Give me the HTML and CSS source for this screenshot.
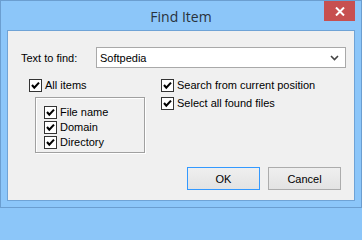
FILE: index.html
```html
<!DOCTYPE html>
<html>
<head>
<meta charset="utf-8">
<link rel="stylesheet" href="styles.css">
</head>
<body>
<div class="window">
  <div class="titlebar">
    <span></span>
    <span class="title">Find Item</span>
    <span class="close"><svg width="10" height="9" viewBox="0 0 10 9"><path d="M1 0.5 L9 8.5 M9 0.5 L1 8.5" stroke="#fff" stroke-width="2"/></svg></span>
  </div>
  <div class="client">
    <div class="find-row">
      <span class="label">Text to find:</span>
      <div class="combo">
        <span class="combo-text">Softpedia</span>
        <svg class="arrow" width="9" height="6" viewBox="0 0 9 6"><path d="M1 1 L4.5 4.5 L8 1" stroke="#444" stroke-width="1.6" fill="none"/></svg>
      </div>
    </div>
    <div class="options">
      <div class="col-left">
        <label class="check"><span class="box"><svg width="11" height="11" viewBox="0 0 11 11"><path d="M2 5 L4.3 7.6 L9 2.6" stroke="#000" stroke-width="2.1" fill="none"/></svg></span>All items</label>
        <div class="group">
          <label class="check"><span class="box"><svg width="11" height="11" viewBox="0 0 11 11"><path d="M2 5 L4.3 7.6 L9 2.6" stroke="#000" stroke-width="2.1" fill="none"/></svg></span>File name</label>
          <label class="check"><span class="box"><svg width="11" height="11" viewBox="0 0 11 11"><path d="M2 5 L4.3 7.6 L9 2.6" stroke="#000" stroke-width="2.1" fill="none"/></svg></span>Domain</label>
          <label class="check"><span class="box"><svg width="11" height="11" viewBox="0 0 11 11"><path d="M2 5 L4.3 7.6 L9 2.6" stroke="#000" stroke-width="2.1" fill="none"/></svg></span>Directory</label>
        </div>
      </div>
      <div class="col-right">
        <label class="check"><span class="box"><svg width="11" height="11" viewBox="0 0 11 11"><path d="M2 5 L4.3 7.6 L9 2.6" stroke="#000" stroke-width="2.1" fill="none"/></svg></span>Search from current position</label>
        <label class="check"><span class="box"><svg width="11" height="11" viewBox="0 0 11 11"><path d="M2 5 L4.3 7.6 L9 2.6" stroke="#000" stroke-width="2.1" fill="none"/></svg></span>Select all found files</label>
      </div>
    </div>
    <div class="buttons">
      <button class="btn default">OK</button>
      <button class="btn">Cancel</button>
    </div>
  </div>
</div>
</body>
</html>
```
FILE: styles.css
```css
html, body {
  margin: 0;
  padding: 0;
  background: #8cc6f9;
}
.window {
  width: 362px;
  height: 208px;
  box-sizing: border-box;
  border: 1px solid #6b9ed0;
  background: #8cc6f9;
  padding: 0 6px 6px 6px;
  display: flex;
  flex-direction: column;
  font-family: "Liberation Sans", Arial, sans-serif;
  font-size: 11px;
  color: #000;
}
.titlebar {
  height: 29px;
  display: grid;
  grid-template-columns: 1fr auto 1fr;
}
.title {
  font-family: "Open Sans", "Noto Sans", sans-serif;
  font-size: 14px;
  color: #29323c;
  line-height: 29px;
  padding-top: 1px;
}
.close {
  justify-self: end;
  width: 31px;
  height: 20px;
  background: #c75050;
  display: flex;
  align-items: center;
  justify-content: center;
}
.client {
  flex: 1;
  border: 1px solid #6fa3d6;
  background: #f0f0f0;
  padding: 16px 8px 10px 13px;
  display: flex;
  flex-direction: column;
}
.find-row {
  display: flex;
  align-items: center;
  height: 21px;
}
.label {
  width: 75px;
}
.combo {
  flex: 1;
  height: 21px;
  box-sizing: border-box;
  border: 1px solid #a9a9a9;
  background: #fff;
  display: flex;
  align-items: center;
  padding: 0 6px 0 3px;
}
.combo-text {
  flex: 1;
}
.options {
  display: flex;
  margin-top: 11px;
}
.col-left {
  margin-left: 8px;
  width: 132px;
  display: flex;
  flex-direction: column;
}
.col-right {
  display: flex;
  flex-direction: column;
  gap: 5px;
}
.check {
  display: flex;
  align-items: center;
  height: 13px;
  line-height: 13px;
  gap: 3px;
  white-space: nowrap;
}
.box {
  width: 13px;
  height: 13px;
  box-sizing: border-box;
  border: 1px solid #333;
  background: #fff;
  display: flex;
  flex: none;
}
.group {
  margin-top: 5px;
  margin-left: 6px;
  width: 110px;
  box-sizing: border-box;
  border: 1px solid #a0a0a0;
  box-shadow: 1px 1px 0 #fff, inset 1px 1px 0 #fff;
  padding: 8px 0 3px 8px;
  display: flex;
  flex-direction: column;
  gap: 2px;
}
.buttons {
  margin-top: auto;
  margin-right: 5px;
  display: flex;
  justify-content: flex-end;
  gap: 8px;
}
.btn {
  width: 73px;
  height: 23px;
  box-sizing: border-box;
  border: 1px solid #acacac;
  background: linear-gradient(#efefef, #e3e3e3);
  font-family: "Liberation Sans", Arial, sans-serif;
  font-size: 11px;
  color: #000;
  padding: 0;
  margin: 0;
}
.btn.default {
  border-color: #3399ff;
}
```
